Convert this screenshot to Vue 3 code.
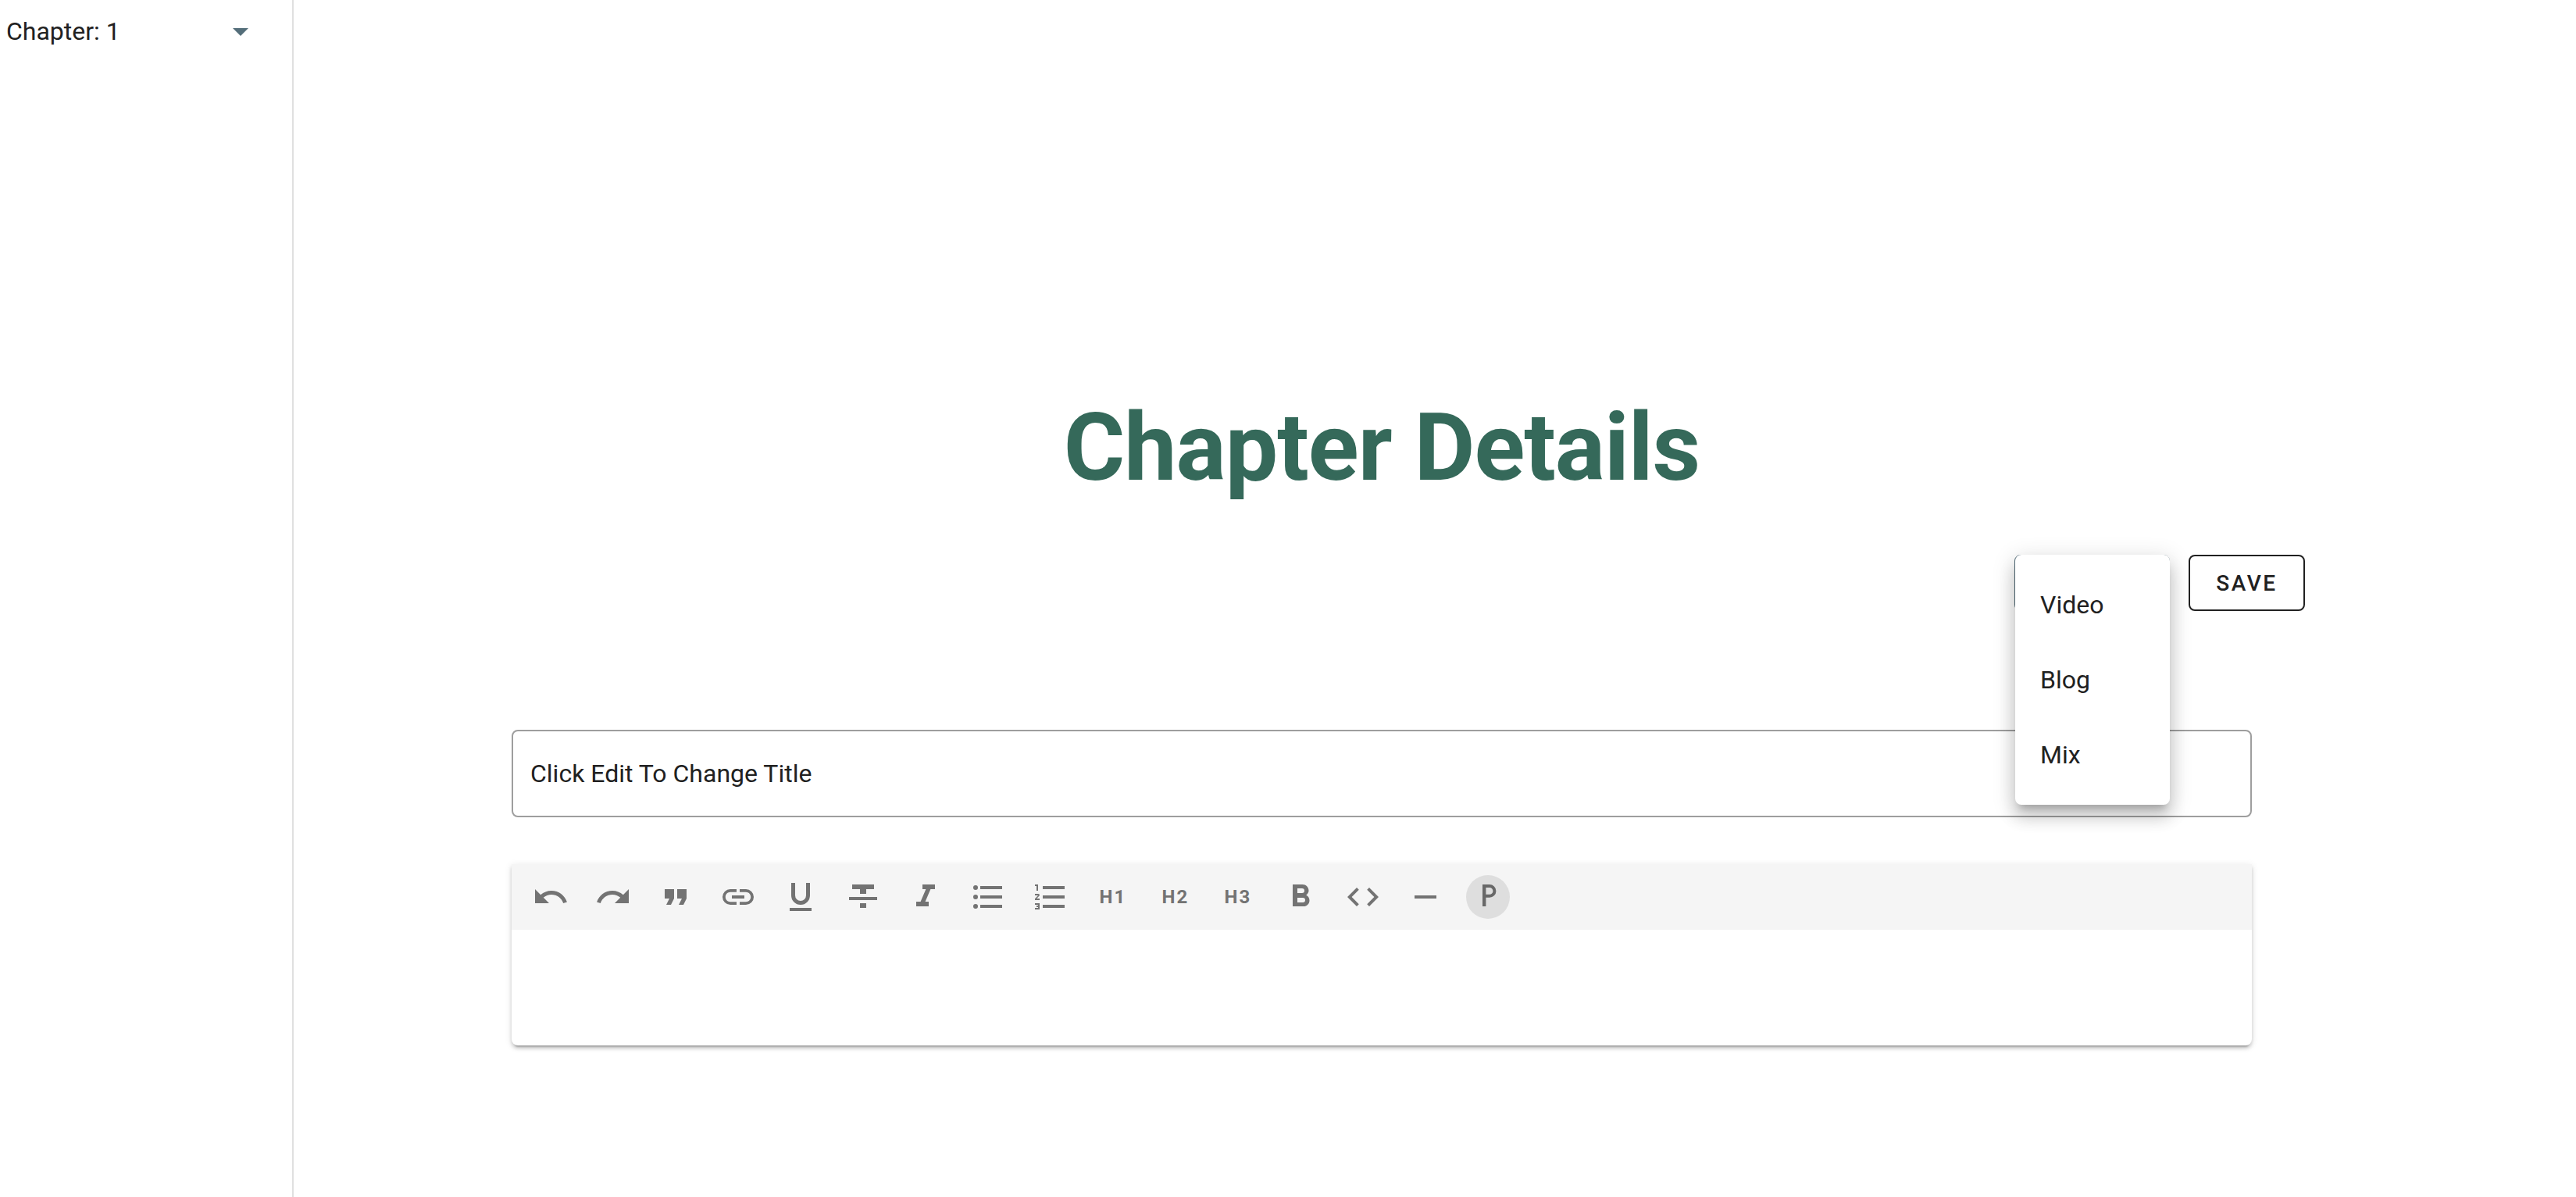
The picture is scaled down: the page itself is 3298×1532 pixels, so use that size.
<script setup>
import { ref } from 'vue'

const chapter = ref('Chapter: 1')
const title = ref('Click Edit To Change Title')
const kinds = ['Video', 'Blog', 'Mix']

const tools = [
  { name: 'Undo', path: 'M12.5,8C9.85,8 7.45,9 5.6,10.6L2,7V16H11L7.38,12.38C8.77,11.22 10.54,10.5 12.5,10.5C16.04,10.5 19.05,12.81 20.1,16L22.47,15.22C21.08,11.03 17.15,8 12.5,8Z' },
  { name: 'Redo', path: 'M18.4,10.6C16.55,9 14.15,8 11.5,8C6.85,8 2.92,11.03 1.54,15.22L3.9,16C4.95,12.81 7.95,10.5 11.5,10.5C13.45,10.5 15.23,11.22 16.62,12.38L13,16H22V7L18.4,10.6Z' },
  { name: 'Quote', path: 'M14,17H17L19,13V7H13V13H16M6,17H9L11,13V7H5V13H8L6,17Z' },
  { name: 'Link', path: 'M3.9,12C3.9,10.29 5.29,8.9 7,8.9H11V7H7A5,5 0 0,0 2,12A5,5 0 0,0 7,17H11V15.1H7C5.29,15.1 3.9,13.71 3.9,12M8,13H16V11H8V13M17,7H13V8.9H17C18.71,8.9 20.1,10.29 20.1,12C20.1,13.71 18.71,15.1 17,15.1H13V17H17A5,5 0 0,0 22,12A5,5 0 0,0 17,7Z' },
  { name: 'Underline', path: 'M5,21H19V19H5V21M12,17A6,6 0 0,0 18,11V3H15.5V11A3.5,3.5 0 0,1 12,14.5A3.5,3.5 0 0,1 8.5,11V3H6V11A6,6 0 0,0 12,17Z' },
  { name: 'Strikethrough', path: 'M3,14H21V12H3M5,4V7H10V10H14V7H19V4M10,19H14V16H10V19Z' },
  { name: 'Italic', path: 'M10,4V7H12.21L8.79,15H6V18H14V15H11.79L15.21,7H18V4H10Z' },
  { name: 'Bulleted list', path: 'M7,5H21V7H7V5M7,13V11H21V13H7M4,4.5A1.5,1.5 0 0,1 5.5,6A1.5,1.5 0 0,1 4,7.5A1.5,1.5 0 0,1 2.5,6A1.5,1.5 0 0,1 4,4.5M4,10.5A1.5,1.5 0 0,1 5.5,12A1.5,1.5 0 0,1 4,13.5A1.5,1.5 0 0,1 2.5,12A1.5,1.5 0 0,1 4,10.5M7,19V17H21V19H7M4,16.5A1.5,1.5 0 0,1 5.5,18A1.5,1.5 0 0,1 4,19.5A1.5,1.5 0 0,1 2.5,18A1.5,1.5 0 0,1 4,16.5Z' },
  { name: 'Numbered list', path: 'M7,13V11H21V13H7M7,19V17H21V19H7M7,7V5H21V7H7M3,8V5H2V4H4V8H3M2,17V16H5V20H2V19H4V18.5H3V17.5H4V17H2M4.25,10A0.75,0.75 0 0,1 5,10.75C5,10.95 4.92,11.14 4.79,11.27L3.12,13H5V14H2V13.08L4,11H2V10H4.25Z' },
  { name: 'Heading 1', text: 'H1' },
  { name: 'Heading 2', text: 'H2' },
  { name: 'Heading 3', text: 'H3' },
  { name: 'Bold', path: 'M13.5,15.5H10V12.5H13.5A1.5,1.5 0 0,1 15,14A1.5,1.5 0 0,1 13.5,15.5M10,6.5H13A1.5,1.5 0 0,1 14.5,8A1.5,1.5 0 0,1 13,9.5H10M15.6,10.79C16.57,10.11 17.25,9 17.25,8C17.25,5.74 15.5,4 13.25,4H7V18H14.04C16.14,18 17.75,16.3 17.75,14.21C17.75,12.69 16.89,11.39 15.6,10.79Z' },
  { name: 'Code', path: 'M14.6,16.6L19.2,12L14.6,7.4L16,6L22,12L16,18L14.6,16.6M9.4,16.6L4.8,12L9.4,7.4L8,6L2,12L8,18L9.4,16.6Z' },
  { name: 'Horizontal rule', path: 'M19,13H5V11H19V13Z' },
  { name: 'Paragraph', active: true, path: 'M8.5,4V18H10.7V12.4H13A4.2,4.2 0 0,0 13,4H8.5M10.7,6H13A2.2,2.2 0 0,1 13,10.4H10.7V6Z' },
]
</script>

<template>
  <div class="layout">
    <aside class="sidebar">
      <label class="chapter">
        <select v-model="chapter" class="chapter-select" aria-label="Chapter">
          <option>Chapter: 1</option>
        </select>
        <svg class="icon chapter-arrow" viewBox="0 0 24 24" aria-hidden="true"><path d="M7,10L12,15L17,10H7Z" /></svg>
      </label>
    </aside>

    <main class="content">
      <h1 class="heading">Chapter Details</h1>

      <div class="actions">
        <div class="kind">
          <button type="button" class="outlined kind-toggle" aria-haspopup="true" aria-expanded="true" aria-label="Chapter type"></button>
          <ul class="menu">
            <li v-for="kind in kinds" :key="kind">
              <button type="button" class="menu-item">{{ kind }}</button>
            </li>
          </ul>
        </div>
        <button type="button" class="outlined save">SAVE</button>
      </div>

      <div class="form">
        <input v-model="title" class="title-field" type="text" aria-label="Title">

        <section class="editor">
          <div class="toolbar" role="toolbar" aria-label="Formatting">
            <button
              v-for="tool in tools"
              :key="tool.name"
              type="button"
              class="tool"
              :class="{ active: tool.active }"
              :aria-label="tool.name"
            >
              <svg v-if="tool.path" class="icon" viewBox="0 0 24 24" aria-hidden="true"><path fill-rule="evenodd" :d="tool.path" /></svg>
              <template v-else>{{ tool.text }}</template>
            </button>
          </div>
          <div class="page" contenteditable="true" role="textbox" aria-label="Chapter text"></div>
        </section>
      </div>
    </main>
  </div>
</template>

<style>
body {
  background: #fff;
}
</style>

<style scoped>
.layout {
  display: flex;
  min-height: 100vh;
  font-family: Roboto, sans-serif;
  font-size: 32px;
  color: #212121;
  background: #fff;
}

.layout * {
  box-sizing: border-box;
}

button,
input,
select {
  margin: 0;
  padding: 0;
  border: 0;
  background: none;
  color: inherit;
  font: inherit;
}

.icon {
  display: block;
  width: 48px;
  height: 48px;
  fill: currentColor;
}

.sidebar {
  flex: none;
  width: 376px;
  border-right: 2px solid #e0e0e0;
}

.chapter {
  display: grid;
  align-items: center;
  height: 80px;
  padding: 0 42px 0 8px;
}

.chapter-select {
  grid-area: 1 / 1;
  width: 100%;
  height: 48px;
  appearance: none;
}

.chapter-arrow {
  grid-area: 1 / 1;
  justify-self: end;
  color: #546e7a;
  pointer-events: none;
}

.content {
  flex: 1;
  min-width: 0;
  padding: 513px 347px 64px 211px;
}

.heading {
  margin: 0;
  font-size: 120px;
  line-height: 120px;
  font-weight: 700;
  letter-spacing: -1px;
  text-align: center;
  color: #35695a;
}

.actions {
  display: flex;
  justify-content: flex-end;
  gap: 24px;
  margin-top: 77px;
}

.outlined {
  height: 72px;
  border: 2px solid #212121;
  border-radius: 8px;
}

.save {
  min-width: 149px;
  padding: 0 32px;
  font-size: 28px;
  font-weight: 500;
  letter-spacing: 0.0892857143em;
}

.kind {
  position: relative;
  width: 199px;
}

.kind-toggle {
  display: block;
  width: 100%;
  border-color: #546e7a;
}

.menu {
  position: absolute;
  top: 0;
  left: 1px;
  right: 0;
  margin: 0;
  padding: 16px 0;
  list-style: none;
  border-radius: 8px;
  background: #fff;
  box-shadow:
    0 10px 10px -6px rgba(0, 0, 0, 0.2),
    0 16px 20px 2px rgba(0, 0, 0, 0.14),
    0 6px 28px 4px rgba(0, 0, 0, 0.12);
}

.menu-item {
  display: block;
  width: 100%;
  height: 96px;
  padding: 0 32px;
  text-align: left;
}

.form {
  display: flex;
  flex-direction: column;
  gap: 60px;
  margin-top: 152px;
  padding: 0 68px;
}

.title-field {
  width: 100%;
  height: 112px;
  padding: 0 22px;
  border: 2px solid #9e9e9e;
  border-radius: 8px;
}

.editor {
  border-radius: 0 0 8px 8px;
  background: #fff;
  box-shadow:
    0 6px 2px -4px rgba(0, 0, 0, 0.2),
    0 4px 4px 0 rgba(0, 0, 0, 0.14),
    0 2px 10px 0 rgba(0, 0, 0, 0.12);
}

.toolbar {
  display: flex;
  align-items: center;
  gap: 24px;
  height: 84px;
  padding: 0 22px;
  background: #f5f5f5;
}

.tool {
  display: flex;
  align-items: center;
  justify-content: center;
  width: 56px;
  height: 56px;
  border-radius: 50%;
  color: #737373;
  font-size: 24px;
  font-weight: 700;
  letter-spacing: 0.0892857143em;
}

.tool.active {
  background: #dedede;
  color: #686868;
}

.page {
  height: 148px;
  outline: none;
}
</style>
